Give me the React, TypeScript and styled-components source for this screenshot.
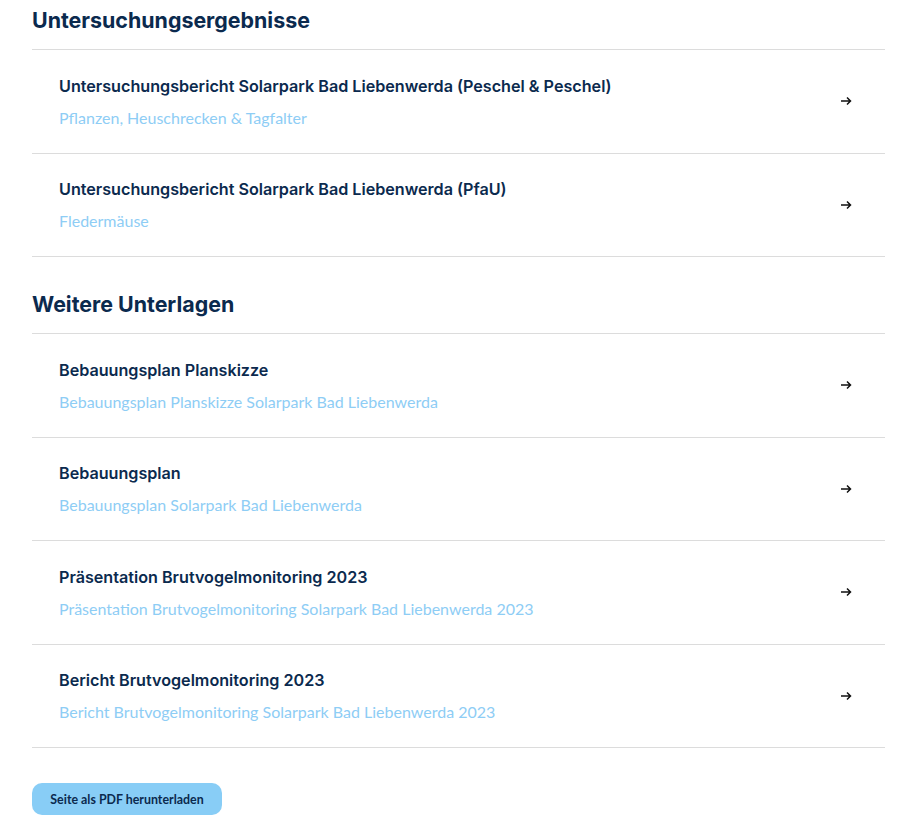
import { createGlobalStyle } from 'styled-components';
import styled from 'styled-components';

const GlobalStyle = createGlobalStyle`
  body {
    margin: 0;
    background: #ffffff;
    font-family: Inter, 'Liberation Sans', sans-serif;
  }
`;

const Page = styled.main`
  padding: 0 19px 14px 32px;
`;

const SectionTitle = styled.h2<{ $top: number }>`
  margin: ${(p) => p.$top}px 0 0;
  height: 50px;
  box-sizing: border-box;
  padding-top: 6px;
  font-size: 21.4px;
  line-height: 28px;
  font-weight: 700;
  color: #0b2a4e;
  border-bottom: 1px solid #dcdcdc;
`;

const List = styled.ul`
  list-style: none;
  margin: 0;
  padding: 0;
`;

const Row = styled.li`
  height: 103.5px;
  box-sizing: border-box;
  border-bottom: 1px solid #dcdcdc;
  display: flex;
  align-items: center;
  justify-content: space-between;
  padding: 0 33px 0 27px;
  cursor: pointer;
`;

const Texts = styled.div`
  display: flex;
  flex-direction: column;
  gap: 11px;
`;

const Title = styled.div`
  font-size: 16.15px;
  line-height: 22px;
  font-weight: 600;
  color: #0b2a4e;
`;

const Subtitle = styled.div`
  font-family: Lato, 'Noto Sans', sans-serif;
  font-size: 16px;
  line-height: 20px;
  color: #8ecdf5;
`;

const Arrow = styled.svg`
  width: 12px;
  height: 10px;
  flex-shrink: 0;
`;

const PdfButton = styled.button`
  margin-top: 35px;
  width: 190px;
  height: 32px;
  border: none;
  border-radius: 10px;
  background: #88cdf6;
  color: #0b2a4e;
  font-family: Lato, 'Noto Sans', sans-serif;
  font-weight: 700;
  font-size: 12.4px;
  cursor: pointer;
`;

type Doc = { title: string; sub: string };

const results: Doc[] = [
  {
    title: 'Untersuchungsbericht Solarpark Bad Liebenwerda (Peschel & Peschel)',
    sub: 'Pflanzen, Heuschrecken & Tagfalter',
  },
  { title: 'Untersuchungsbericht Solarpark Bad Liebenwerda (PfaU)', sub: 'Fledermäuse' },
];

const more: Doc[] = [
  { title: 'Bebauungsplan Planskizze', sub: 'Bebauungsplan Planskizze Solarpark Bad Liebenwerda' },
  { title: 'Bebauungsplan', sub: 'Bebauungsplan Solarpark Bad Liebenwerda' },
  {
    title: 'Präsentation Brutvogelmonitoring 2023',
    sub: 'Präsentation Brutvogelmonitoring Solarpark Bad Liebenwerda 2023',
  },
  {
    title: 'Bericht Brutvogelmonitoring 2023',
    sub: 'Bericht Brutvogelmonitoring Solarpark Bad Liebenwerda 2023',
  },
];

function DocRow({ doc }: { doc: Doc }) {
  return (
    <Row>
      <Texts>
        <Title>{doc.title}</Title>
        <Subtitle>{doc.sub}</Subtitle>
      </Texts>
      <Arrow viewBox="0 0 12 10" fill="none" stroke="#111" strokeWidth={1.5}>
        <path d="M1 5h9.5M7 1.5L10.5 5 7 8.5" />
      </Arrow>
    </Row>
  );
}

export default function App() {
  return (
    <>
      <GlobalStyle />
      <Page>
        <SectionTitle $top={0}>Untersuchungsergebnisse</SectionTitle>
        <List>
          {results.map((d) => (
            <DocRow key={d.title} doc={d} />
          ))}
        </List>
        <SectionTitle $top={27}>Weitere Unterlagen</SectionTitle>
        <List>
          {more.map((d) => (
            <DocRow key={d.title} doc={d} />
          ))}
        </List>
        <PdfButton>Seite als PDF herunterladen</PdfButton>
      </Page>
    </>
  );
}
